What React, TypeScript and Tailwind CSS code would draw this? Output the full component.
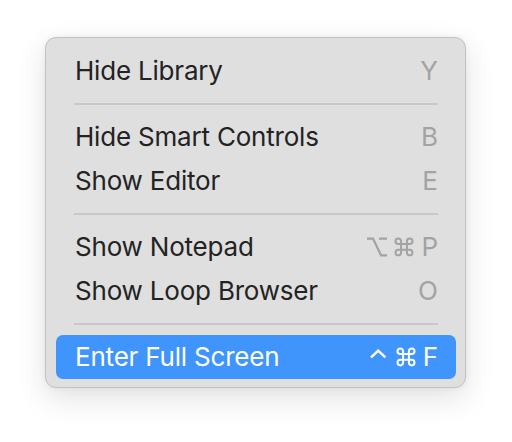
import React from "react";

type Key = "opt" | "cmd" | "ctrl" | string;
type Item = { label: string; keys: Key[]; active?: boolean } | { sep: true };

const items: Item[] = [
  { label: "Hide Library", keys: ["Y"] },
  { sep: true },
  { label: "Hide Smart Controls", keys: ["B"] },
  { label: "Show Editor", keys: ["E"] },
  { sep: true },
  { label: "Show Notepad", keys: ["opt", "cmd", "P"] },
  { label: "Show Loop Browser", keys: ["O"] },
  { sep: true },
  { label: "Enter Full Screen", keys: ["ctrl", "cmd", "F"], active: true },
];

function KeyGlyph({ k }: { k: Key }) {
  if (k === "opt") {
    return (
      <svg width="20" height="26" viewBox="0 0 20 26" fill="none" stroke="currentColor" strokeWidth="2.2">
        <path d="M0 4.6 H6 L14 21.3 H20 M12 4.6 H20" />
      </svg>
    );
  }
  if (k === "cmd") {
    return (
      <svg width="20" height="26" viewBox="0 0 20 26" fill="none" stroke="currentColor" strokeWidth="2">
        <path d="M7.1 10.1 V7.3 A2.8 2.8 0 1 0 4.3 10.1 H15.7 A2.8 2.8 0 1 0 12.9 7.3 V18.6 A2.8 2.8 0 1 0 15.7 15.8 H4.3 A2.8 2.8 0 1 0 7.1 18.6 Z" />
      </svg>
    );
  }
  if (k === "ctrl") {
    return (
      <svg width="20" height="26" viewBox="0 0 20 26" fill="none" stroke="currentColor" strokeWidth="2.5">
        <path d="M2 13.3 L9.2 6.6 L16.4 13.3" />
      </svg>
    );
  }
  return <span>{k}</span>;
}

export default function App() {
  return (
    <div className="w-[512px] h-[442px] bg-white pl-[45px] pt-[37px] overflow-hidden">
      <div
        className="w-[421px] h-[351px] rounded-[11px] border border-[#c2c2c2] bg-[#dfdfdf] pt-[11px] pl-[10px] pr-[9px] shadow-[0_10px_30px_rgba(0,0,0,0.12),0_0_6px_rgba(0,0,0,0.06)]"
        style={{ fontFamily: "Inter, 'Noto Sans', sans-serif" }}
      >
        {items.map((it, i) =>
          "sep" in it ? (
            <div key={i} className="h-[22px] flex items-center px-[18px]">
              <div className="h-[2px] w-full bg-[#c8c8c8]" />
            </div>
          ) : (
            <div
              key={i}
              className={
                it.active
                  ? "h-[44px] flex items-center justify-between pl-[19px] pr-[18px] rounded-[7px] bg-[#3f95fc] text-white"
                  : "h-[44px] flex items-center justify-between pl-[19px] pr-[18px] text-[#232323]"
              }
            >
              <span className="text-[26px] leading-none tracking-[-0.2px]">{it.label}</span>
              <span
                className={
                  it.active
                    ? "flex items-center gap-[7px] text-[26px] leading-none text-white"
                    : "flex items-center gap-[7px] text-[26px] leading-none text-[#a3a3a3]"
                }
              >
                {it.keys.map((k, j) => (
                  <KeyGlyph key={j} k={k} />
                ))}
              </span>
            </div>
          )
        )}
      </div>
    </div>
  );
}
